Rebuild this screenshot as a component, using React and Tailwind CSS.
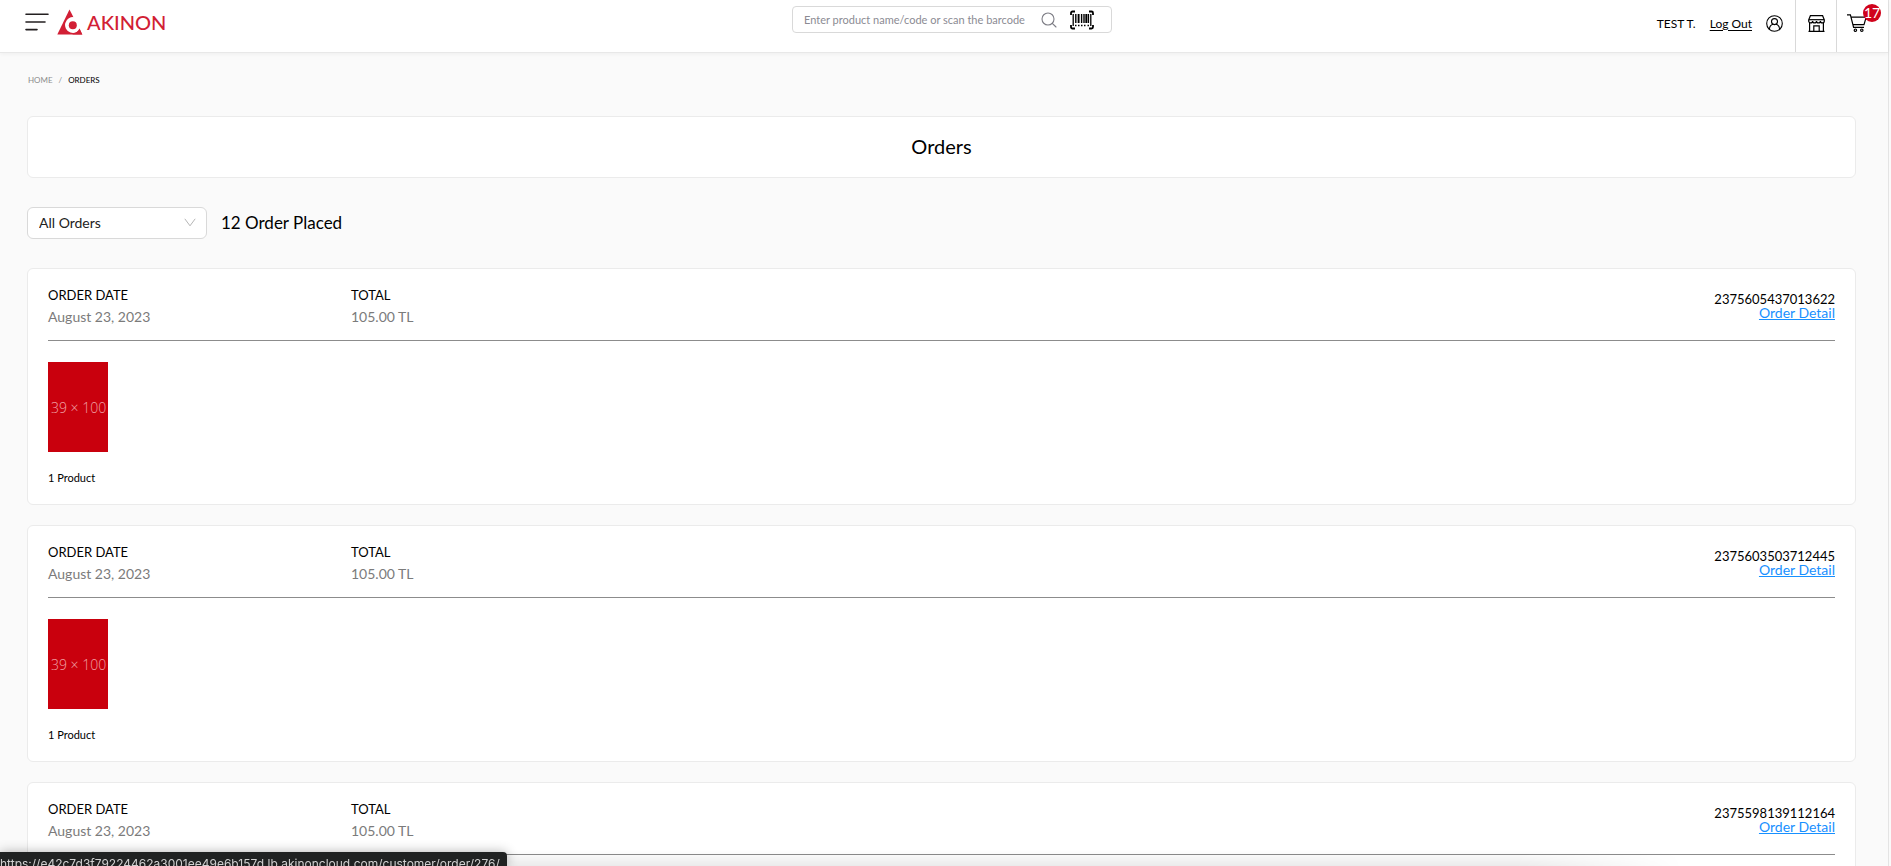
const orders = [
  { id: '2375605437013622', date: 'August 23, 2023', total: '105.00 TL' },
  { id: '2375603503712445', date: 'August 23, 2023', total: '105.00 TL' },
  { id: '2375598139112164', date: 'August 23, 2023', total: '105.00 TL' },
];

function Logo() {
  return (
    <a href="#" aria-label="Akinon" className="flex items-center gap-1 text-[#d21f35]">
      <svg width="26" height="26" viewBox="0 0 26 26" aria-hidden="true">
        <path fill="currentColor" d="M12.5 0.5L25.3 25.5H0.3Z" />
        <path fill="#fff" d="M17.6 8.2A8 8 0 1 0 23.4 19.2L26 14L19 6Z" />
        <path fill="currentColor" d="M22.6 19.6L25.3 25.5H15Q20 24 22.6 19.6Z" />
        <circle fill="currentColor" cx="15.8" cy="16.2" r="4" />
      </svg>
      <span className="text-xl leading-6 font-medium">AKINON</span>
    </a>
  );
}

function MenuIcon() {
  return (
    <svg width="24" height="20" viewBox="0 0 24 20" fill="none" stroke="#231f20" strokeWidth="1.6" strokeLinecap="round">
      <path d="M1 2.2H23M1 10H20M1 17.6H12" />
    </svg>
  );
}

function SearchIcon() {
  return (
    <svg width="16" height="16" viewBox="0 0 16 16" fill="none" stroke="#7d7d85" strokeWidth="1.1" strokeLinecap="round">
      <circle cx="7" cy="7" r="6" />
      <path d="M11.3 11.3L15 15" />
    </svg>
  );
}

function BarcodeIcon() {
  return (
    <svg width="26" height="20" viewBox="0 0 26 20" fill="none" stroke="#000">
      <path strokeWidth="1.8" d="M6 1.5H3.5A1.5 1.5 0 0 0 2 3V5M20 1.5H22.5A1.5 1.5 0 0 1 24 3V5M6 18.5H3.5A1.5 1.5 0 0 1 2 17V15M20 18.5H22.5A1.5 1.5 0 0 0 24 17V15" />
      <path strokeWidth="1.3" d="M4.2 4V16M21.8 4V16" />
      <path strokeWidth="1.4" d="M6.8 4V13M12.6 4V13M15 4V13M19.4 4V13" />
      <path strokeWidth="1.9" d="M9.6 4V13M17.3 4V13" />
      <path strokeWidth="1.5" d="M6 15.5H7.5M9 15.5H10.5M12 15.5H13.5M15 15.5H16.5M18.5 15.5H20" />
    </svg>
  );
}

function UserIcon() {
  return (
    <svg width="17" height="17" viewBox="0 0 17 17" fill="none" stroke="#000" strokeWidth="1.1">
      <circle cx="8.5" cy="8.5" r="7.8" />
      <circle cx="8.5" cy="6.6" r="3" />
      <path d="M3.4 14.2C3.6 11.4 5.2 9.7 7 9.3M13.6 14.2C13.4 11.4 11.8 9.7 10 9.3" />
    </svg>
  );
}

function StoreIcon() {
  return (
    <svg width="17" height="17" viewBox="0 0 17 17" fill="none" stroke="#000" strokeWidth="1.2">
      <path d="M2.4 0.7H14.6L16.3 4.8V6A1.9 1.9 0 0 1 12.4 6A1.9 1.9 0 0 1 8.5 6A1.9 1.9 0 0 1 4.6 6A1.9 1.9 0 0 1 0.7 6V4.8Z" />
      <path d="M1 4.7H16" />
      <path d="M1.6 8V16.2M15.4 8V16.2M0.5 16.3H16.5M5.8 16V10.9H11.2V16" />
    </svg>
  );
}

function CartIcon() {
  return (
    <svg width="20" height="19" viewBox="0 0 20 19" fill="none" stroke="#000" strokeWidth="1.2">
      <path d="M0 0.8H3.4L6.6 13.4H17M4.2 3.2H19.2L17 10.6H6" />
      <circle cx="8.4" cy="16.2" r="1.2" />
      <circle cx="14.8" cy="16.2" r="1.2" />
    </svg>
  );
}

function Header() {
  return (
    <header className="grid h-[53px] grid-cols-[1fr_320px_1fr] items-start border-b border-[#e8e8e8] bg-white pl-4 shadow-[0_1px_4px_rgba(0,0,0,0.05)]">
      <div className="flex items-center gap-2 pt-[9px] pl-[9px]">
        <button type="button" aria-label="Menu"><MenuIcon /></button>
        <Logo />
      </div>
      <form className="mt-1.5 flex h-[27px] items-center rounded border border-[#d9d9d9] pr-4 pl-[11px]">
        <input
          type="text"
          aria-label="Search products"
          placeholder="Enter product name/code or scan the barcode"
          className="min-w-0 flex-1 text-[11px] leading-4 outline-none placeholder:text-[#8b8b93]"
        />
        <button type="button" aria-label="Search"><SearchIcon /></button>
        <button type="button" aria-label="Scan barcode" className="ml-3"><BarcodeIcon /></button>
      </form>
      <div className="flex h-[52px] justify-end text-xs text-black">
        <div className="flex h-[47px] items-center gap-[14px] pr-3">
          <span>TEST T.</span>
          <a href="#" className="underline underline-offset-2">Log Out</a>
          <a href="#" aria-label="Account"><UserIcon /></a>
        </div>
        <a href="#" aria-label="Stores" className="flex w-[41px] justify-center border-l border-[#d9d9d9] pt-[15px]"><StoreIcon /></a>
        <a href="#" aria-label="Cart" className="relative w-[52px] border-l border-[#d9d9d9] pt-[14px] pl-2.5">
          <CartIcon />
          <span className="absolute top-1 right-[7px] size-[18px] rounded-full bg-[#d0021b] text-center text-sm leading-[18px] text-white">17</span>
        </a>
      </div>
    </header>
  );
}

function OrderCard({ order }) {
  return (
    <article className="h-[237px] rounded-md border border-[#ebebeb] bg-white px-5 pt-4">
      <div className="flex h-14 border-b border-[#8c8c8c] text-sm leading-[21px]">
        <dl className="w-[303px]">
          <dt className="text-[13px] text-black">ORDER DATE</dt>
          <dd className="text-[#7b7b7b]">{order.date}</dd>
        </dl>
        <dl>
          <dt className="text-[13px] text-black">TOTAL</dt>
          <dd className="text-[#7b7b7b]">{order.total}</dd>
        </dl>
        <div className="ml-auto flex flex-col items-end pt-[7px] leading-[14px]">
          <span className="text-[13px] text-black">{order.id}</span>
          <a href="#" className="text-[#1890ff] underline">Order Detail</a>
        </div>
      </div>
      <div className="mt-[21px] flex h-[90px] w-[60px] items-center overflow-hidden bg-[#c9000d] pl-[3px] font-['Open_Sans',sans-serif] text-[14px] font-light whitespace-nowrap text-[#f0a0a5]">
        39 × 100
      </div>
      <p className="mt-[17px] text-[11px] leading-[18px] text-black">1 Product</p>
    </article>
  );
}

export default function App() {
  return (
    <div className="h-screen overflow-hidden bg-[#fafafa] pr-[2px] font-[Lato,sans-serif]">
      <div className="min-h-full border-r border-[#e4e4e4]">
        <Header />
        <main className="pr-8 pl-[27px]">
          <nav aria-label="Breadcrumb" className="flex gap-1.5 pt-[21px] pl-px text-[8px] leading-3 text-[#8c8c8c]">
            <a href="#">HOME</a>
            <span>/</span>
            <span className="text-black">ORDERS</span>
          </nav>
          <h1 className="mt-[30px] h-[62px] rounded-md border border-[#ebebeb] bg-white text-center text-xl leading-[58px] text-black">Orders</h1>
          <div className="mt-[29px] flex items-center gap-[14px]">
            <div className="relative">
              <select aria-label="Order filter" className="h-8 w-[180px] appearance-none rounded-md border border-[#d9d9d9] bg-white pl-[11px] text-sm text-[#222]">
                <option>All Orders</option>
              </select>
              <svg className="pointer-events-none absolute top-[11px] right-[11px]" width="12" height="9" viewBox="0 0 12 9" fill="none" stroke="#b5b5b5">
                <path d="M0.8 0.8L6 7.8L11.2 0.8" />
              </svg>
            </div>
            <h2 className="text-[17px] leading-6 text-black">12 Order Placed</h2>
          </div>
          <section aria-label="Orders" className="mt-[29px] flex flex-col gap-5">
            {orders.map((order) => <OrderCard key={order.id} order={order} />)}
          </section>
        </main>
      </div>
      <div className="pointer-events-none fixed bottom-0 left-0 h-4 w-[89%] bg-linear-to-t from-black/8 to-transparent mask-r-from-90%" />
      <div className="fixed bottom-0 left-0 h-[14px] w-[507px] overflow-hidden rounded-tr bg-[#202222] font-[Inter,sans-serif] text-xs leading-6 whitespace-nowrap text-[#d0d0d0] shadow-[0_0_12px_rgba(0,0,0,0.3)]">
        https://e42c7d3f79224462a3001ee49e6b157d.lb.akinoncloud.com/customer/order/276/
      </div>
    </div>
  );
}
